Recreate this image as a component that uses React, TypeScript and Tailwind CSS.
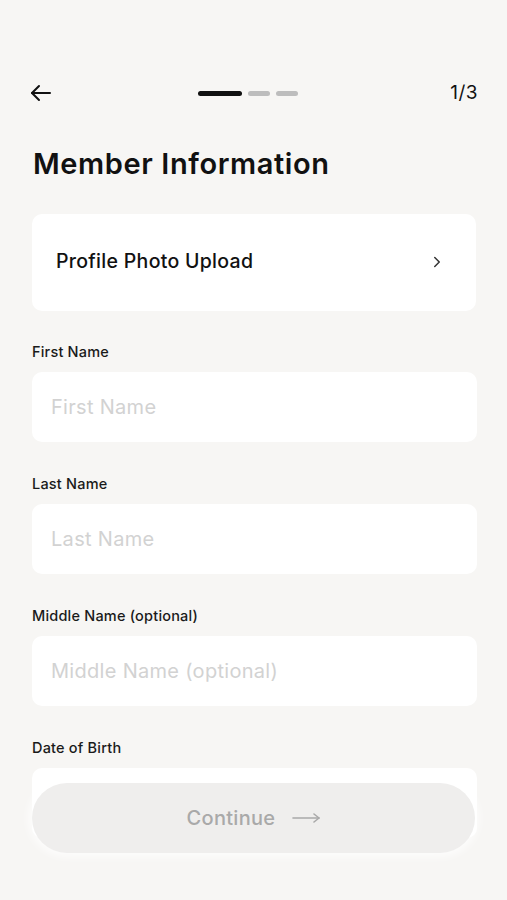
import { ChevronRight } from "lucide-react";

const fields = [
  { label: "First Name", placeholder: "First Name" },
  { label: "Last Name", placeholder: "Last Name" },
  { label: "Middle Name (optional)", placeholder: "Middle Name (optional)" },
  { label: "Date of Birth", placeholder: "" },
];

const App = () => {
  return (
    <div
      className="relative h-[900px] w-full overflow-hidden bg-[#f7f6f4] text-[#111]"
      style={{ fontFamily: "Inter, 'Open Sans', sans-serif" }}
    >
      {/* top bar */}
      <div className="flex items-center justify-between px-[29px] pt-[79px]">
        <svg width="24" height="24" viewBox="0 0 24 24" fill="none" stroke="#111" strokeWidth="2" strokeLinecap="round" strokeLinejoin="round">
          <path d="M21 12H3" />
          <path d="M10 5l-7 7 7 7" />
        </svg>
        <div className="ml-[-8px] flex items-center gap-[6px]">
          <div className="h-[5px] w-[44px] rounded-full bg-[#111]" />
          <div className="h-[5px] w-[22px] rounded-full bg-[#bdbdbd]" />
          <div className="h-[5px] w-[22px] rounded-full bg-[#bdbdbd]" />
        </div>
        <span className="text-[19px] font-normal tracking-[0.5px]">1/3</span>
      </div>

      <h1 className="mt-[39px] px-[33px] text-[29px] font-semibold leading-[34px] tracking-[0.6px]">
        Member Information
      </h1>

      <div className="mt-[33px] pl-[32px] pr-[30px]">
        <div className="mr-[1px] flex h-[97px] items-center justify-between rounded-[10px] bg-white pl-[24px] pr-[30px]">
          <span className="text-[19.5px] font-medium tracking-[0.3px]">Profile Photo Upload</span>
          <ChevronRight size={18} strokeWidth={2} color="#333" />
        </div>

        <div className="mt-[31px] flex flex-col gap-[32px]">
          {fields.map(({ label, placeholder }) => (
            <div key={label} className="flex flex-col gap-[10px]">
              <label className="text-[14.5px] font-medium leading-[20px] tracking-[0.2px] text-[#1a1a1a]">{label}</label>
              <div className="flex h-[70px] items-center rounded-[10px] bg-white px-[19px]">
                <span className="text-[20px] tracking-[0.3px] text-[#d2d2d2]">{placeholder}</span>
              </div>
            </div>
          ))}
        </div>
      </div>

      {/* bottom button */}
      <div className="absolute inset-x-[32px] top-[783px]">
        <button className="flex h-[70px] w-full items-center justify-center gap-[17px] rounded-full bg-[#efeeed] shadow-[0_0_8px_4px_rgba(255,255,255,0.7)]">
          <span className="text-[20px] font-medium tracking-[0.3px] text-[#a9a9a9]">Continue</span>
          <svg width="28" height="12" viewBox="0 0 28 12" fill="none" stroke="#a9a9a9" strokeWidth="1.6" strokeLinecap="round" strokeLinejoin="round">
            <path d="M1 6h26" />
            <path d="M22 2l5 4-5 4" />
          </svg>
        </button>
      </div>
    </div>
  );
};

export default App;
